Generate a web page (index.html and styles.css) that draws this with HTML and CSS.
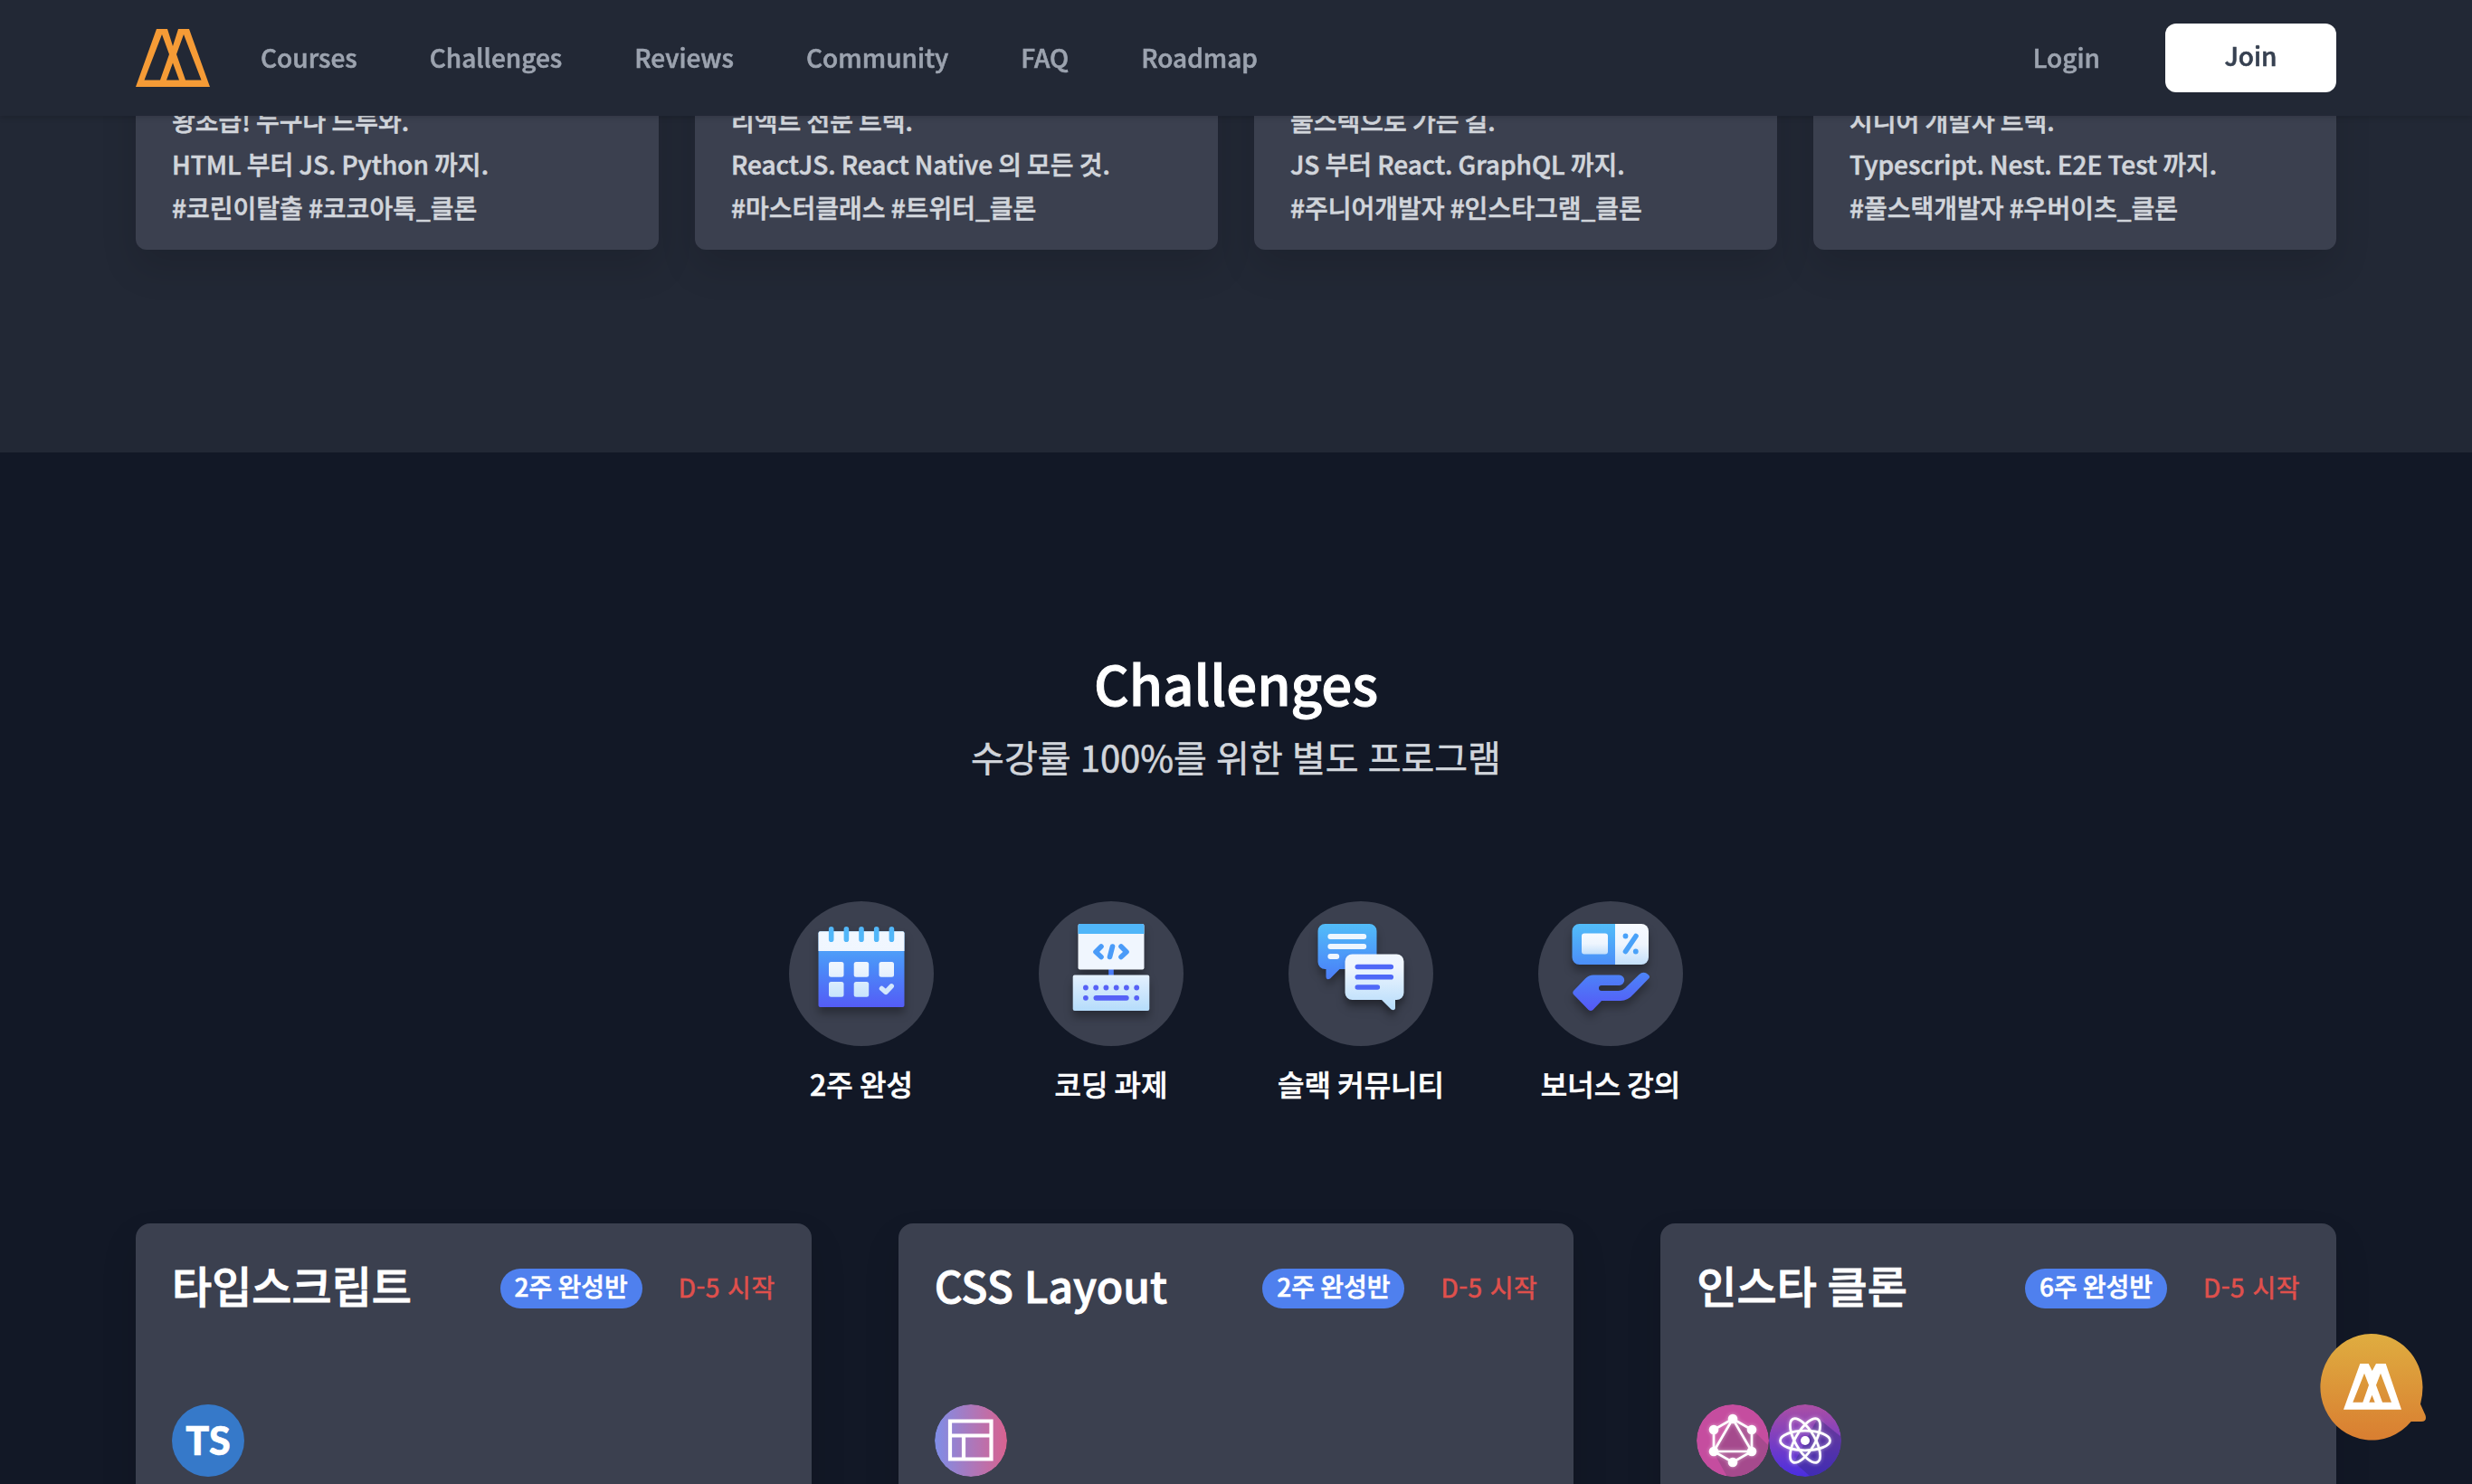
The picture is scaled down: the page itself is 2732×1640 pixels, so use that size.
FILE: index.html
```html
<!DOCTYPE html>
<html lang="ko">
<head>
<meta charset="utf-8">
<title>Challenges</title>
<link rel="stylesheet" href="styles.css">
</head>
<body>
<svg class="defs" width="0" height="0" aria-hidden="true">
  <defs>
    <linearGradient id="blue" gradientUnits="userSpaceOnUse" x1="0" y1="0" x2="0" y2="96"><stop offset="0" stop-color="#52bdf9"/><stop offset=".5" stop-color="#4b8bf8"/><stop offset="1" stop-color="#5558f6"/></linearGradient>
    <linearGradient id="pale" gradientUnits="userSpaceOnUse" x1="0" y1="0" x2="0" y2="96"><stop offset="0" stop-color="#f3f8ff"/><stop offset=".5" stop-color="#eef5fe"/><stop offset="1" stop-color="#b5dcfb"/></linearGradient>
    <linearGradient id="ticket" x1="0" y1="0" x2="0" y2="1"><stop offset="0" stop-color="#f7faff"/><stop offset=".5" stop-color="#eef5fe"/><stop offset="1" stop-color="#c3e0fb"/></linearGradient>
    <linearGradient id="gold" x1="0" y1="0" x2="0" y2="1"><stop offset="0" stop-color="#dfad40"/><stop offset="1" stop-color="#d97e31"/></linearGradient>
    <linearGradient id="rose" x1="0" y1="0" x2="1" y2="0"><stop offset="0" stop-color="#7e8ee8"/><stop offset="1" stop-color="#d9628f"/></linearGradient>
    <linearGradient id="violet" x1="0" y1="0" x2="0" y2="1"><stop offset="0" stop-color="#ac4fa4"/><stop offset="1" stop-color="#4a2ee0"/></linearGradient>
    <clipPath id="round"><circle cx="40" cy="40" r="40"/></clipPath>
  </defs>
</svg>

<header class="nav">
  <div class="wrap nav-row">
    <svg class="logo" viewBox="0 0 82 64"><path fill="#f59b36" fill-rule="evenodd" d="M23 0H35L41 19L47 0H59L82 64H0ZM29 6L9.500 56.500H27L37 28ZM53 6L45 28L55 56.500H72.500ZM41 37.500L34 56.500H48Z"/></svg>
    <nav class="links">
      <a>Courses</a><a>Challenges</a><a>Reviews</a><a>Community</a><a>FAQ</a><a>Roadmap</a>
    </nav>
    <a class="login">Login</a>
    <a class="join">Join</a>
  </div>
</header>

<section class="tracks">
  <div class="wrap track-grid">
    <article class="track"><p>왕초급! 누구나 드루와.</p><p>HTML 부터 JS. Python 까지.</p><p>#코린이탈출 #코코아톡_클론</p></article>
    <article class="track"><p>리액트 전문 트랙.</p><p>ReactJS. React Native 의 모든 것.</p><p>#마스터클래스 #트위터_클론</p></article>
    <article class="track"><p>풀스택으로 가는 길.</p><p>JS 부터 React. GraphQL 까지.</p><p>#주니어개발자 #인스타그램_클론</p></article>
    <article class="track"><p>시니어 개발자 트랙.</p><p>Typescript. Nest. E2E Test 까지.</p><p>#풀스택개발자 #우버이츠_클론</p></article>
  </div>
</section>

<main class="challenges">
  <h1>Challenges</h1>
  <p class="sub">수강률 100%를 위한 별도 프로그램</p>

  <ul class="perks">
    <li>
      <span class="disc"><svg viewBox="0 0 96 96">
        <rect x=".5" y="8.300" width="95" height="83.700" rx="2" fill="url(#blue)"/>
        <path d="M.5 30V10.300a2 2 0 0 1 2-2h91a2 2 0 0 1 2 2V30z" fill="url(#pale)"/>
        <path d="M14.700 5.800v11.400M31.400 5.800v11.400M48 5.800v11.400M64.700 5.800v11.400M81.400 5.800v11.400" stroke="#52b7f9" stroke-width="5.600" stroke-linecap="round"/>
        <g fill="url(#pale)"><rect x="12" y="42" width="16.500" height="16.700" rx="2.500"/><rect x="39.700" y="42" width="16.500" height="16.700" rx="2.500"/><rect x="67.500" y="42" width="16.500" height="16.700" rx="2.500"/><rect x="12" y="64" width="16.500" height="16.700" rx="2.500"/><rect x="39.700" y="64" width="16.500" height="16.700" rx="2.500"/></g>
        <path d="M70.500 71.500l4.500 3.800 6.200-6.500" fill="none" stroke="#d3e8fc" stroke-width="5.500" stroke-linecap="round" stroke-linejoin="round"/>
      </svg></span>
      <b>2주 완성</b>
    </li>
    <li>
      <span class="disc"><svg viewBox="0 0 96 96">
        <rect x="45.200" y="45" width="5.600" height="12" fill="#4a7cf8"/>
        <rect x="11.500" y="0" width="73" height="50.500" rx="2" fill="#f0f6fe"/>
        <path d="M11.500 11V2a2 2 0 0 1 2-2h69a2 2 0 0 1 2 2v9z" fill="#50b6f9"/>
        <path d="M37 25l-6 6 6 5.500M49.500 25l-3 11.500M59 25l6 6-6 5.500" fill="none" stroke="#4a9bf8" stroke-width="5.600" stroke-linecap="round" stroke-linejoin="round"/>
        <rect x="5.700" y="56.500" width="84.600" height="39.500" rx="2" fill="url(#pale)"/>
        <g fill="#5661f6"><circle cx="19.900" cy="70.500" r="2.900"/><circle cx="31.200" cy="70.500" r="2.900"/><circle cx="42.400" cy="70.500" r="2.900"/><circle cx="53.700" cy="70.500" r="2.900"/><circle cx="64.900" cy="70.500" r="2.900"/><circle cx="76.200" cy="70.500" r="2.900"/><circle cx="19.900" cy="81.800" r="2.900"/><circle cx="76.200" cy="81.800" r="2.900"/><rect x="28.500" y="78.900" width="39.200" height="5.800" rx="2.900"/></g>
      </svg></span>
      <b>코딩 과제</b>
    </li>
    <li>
      <span class="disc"><svg viewBox="0 0 96 96">
        <path d="M8.500 0h49a8 8 0 0 1 8 8v34H40v8H24.500L14 60.500q-4.500 2-4.500-2V50H8.500a8 8 0 0 1-8-8V8a8 8 0 0 1 8-8z" fill="url(#blue)"/>
        <path d="M14.300 14h37M14.300 25h37M14.300 36h7" stroke="#eef6fe" stroke-width="5.800" stroke-linecap="round"/>
        <g class="cast"><path d="M38.500 33.500h49a8 8 0 0 1 8 8V76a8 8 0 0 1-8 8h-1.500v9.500q-1 3-4.500 1L71 84H38.500a8 8 0 0 1-8-8V41.500a8 8 0 0 1 8-8z" fill="url(#pale)"/></g>
        <path d="M44.300 47.500h37M44.300 58.800h37M44.300 70h22" stroke="#4f68f7" stroke-width="5.600" stroke-linecap="round"/>
      </svg></span>
      <b>슬랙 커뮤니티</b>
    </li>
    <li>
      <span class="disc"><svg viewBox="0 0 96 96">
        <path d="M13.500 0H53v45H13.500a8 8 0 0 1-8-8V8a8 8 0 0 1 8-8z" fill="url(#blue)"/>
        <path d="M53 0h29a8 8 0 0 1 8 8v29a8 8 0 0 1-8 8H53z" fill="url(#ticket)"/>
        <rect x="16" y="10.500" width="29" height="23" rx="3" fill="url(#ticket)"/>
        <path d="M64.500 30.500l11.500-17" stroke="#4aa2f9" stroke-width="5.600" stroke-linecap="round"/>
        <circle cx="64.500" cy="13.500" r="2.900" fill="#4aa2f9"/><circle cx="75.800" cy="30.500" r="2.900" fill="#4aa2f9"/>
        <path d="M29 56.500H57.500a5.700 5.700 0 0 1 0 11.400H38a3 3 0 0 0 0 6H57q4 0 7-3L79.500 56q5-4.500 10 0 2.500 2 1 4L74 77q-7 8-15 8H38L28.500 95q-2.500 2-5 0L7 78q-1.500-2 0-4L20 60.500q4-4 9-4z" fill="url(#blue)"/>
      </svg></span>
      <b>보너스 강의</b>
    </li>
  </ul>

  <div class="wrap cards">
    <article class="card">
      <div class="card-head"><h2>타입스크립트</h2><span class="pill">2주 완성반</span><span class="due">D-5 시작</span></div>
      <div class="tech"><span class="ts">TS</span></div>
    </article>
    <article class="card">
      <div class="card-head"><h2>CSS Layout</h2><span class="pill">2주 완성반</span><span class="due">D-5 시작</span></div>
      <div class="tech"><svg viewBox="0 0 80 80"><circle cx="40" cy="40" r="40" fill="url(#rose)"/><path d="M17 18.500H62.500V60.500H17ZM17 34.500H62.500M32 34.500V60.500" fill="none" stroke="#fff" stroke-width="4.200"/></svg></div>
    </article>
    <article class="card">
      <div class="card-head"><h2>인스타 클론</h2><span class="pill">6주 완성반</span><span class="due">D-5 시작</span></div>
      <div class="tech">
        <svg viewBox="0 0 80 80"><g clip-path="url(#round)"><rect width="80" height="80" fill="#c54d9f"/><path d="M40 16L61 27L84 50V84H36L19 53Z" fill="#a54a8d"/></g>
          <g class="glow"><path d="M40 16L61 28V52L40 64L19 52V28ZM40 16L61 52H19Z" stroke="#fff" fill="none" stroke-width="2.700"/>
          <g fill="#fff"><circle cx="40" cy="16" r="5.300"/><circle cx="61" cy="28" r="5.300"/><circle cx="61" cy="52" r="5.300"/><circle cx="40" cy="64" r="5.300"/><circle cx="19" cy="52" r="5.300"/><circle cx="19" cy="28" r="5.300"/></g></g></svg>
        <svg viewBox="0 0 80 80"><circle cx="40" cy="40" r="40" fill="url(#violet)"/><path clip-path="url(#round)" d="M54 15L80 36V80H46L28 64Z" fill="#332b7e" opacity=".45"/>
          <g class="glow" stroke="#fff" fill="none" stroke-width="2.800"><ellipse cx="40" cy="40" rx="27.500" ry="10.800"/><ellipse cx="40" cy="40" rx="27.500" ry="10.800" transform="rotate(60 40 40)"/><ellipse cx="40" cy="40" rx="27.500" ry="10.800" transform="rotate(120 40 40)"/></g><circle cx="40" cy="40" r="5" fill="#fff"/></svg>
      </div>
    </article>
  </div>
</main>

<div class="chat">
  <svg viewBox="0 0 118 118"><path fill="url(#gold)" d="M57.500 0C89 0 114.500 26 114.500 59Q114.500 68 112 77.700L117.500 90Q119.500 97 113 97H101.700A57 58.800 0 1 1 57.500 0Z"/>
  <path fill="#fff" fill-rule="evenodd" d="M45.300 33H54.700L58.700 41L63 33H73.700L91 83.700H27ZM50 43.700L37.300 75.700H48.300L55 56.700ZM68 43.700L63 56.700L70 75.700H80ZM58.500 67.700L55.300 75.700H61.700Z"/></svg>
</div>
</body>
</html>
```
FILE: styles.css
```css
* { box-sizing: border-box; margin: 0; padding: 0; }
body {
  height: 1640px;
  overflow: hidden;
  background: #121826;
  color: #fff;
  font-family: "Noto Sans CJK KR", sans-serif;
  font-weight: 500;
  word-spacing: -1.7px;
  -webkit-text-stroke: .6px currentColor;
}
.defs { position: absolute; }
.wrap { width: 2432px; margin: 0 auto; }

/* Fixed top bar */
.nav {
  position: fixed;
  top: 0;
  left: 0;
  right: 0;
  z-index: 2;
  height: 128px;
  background: #222835;
  box-shadow: 0 2px 6px rgba(0, 0, 0, .15);
}
.nav-row { display: flex; align-items: center; height: 128px; }
.logo { width: 82px; height: 64px; }
.links { display: flex; gap: 80px; margin-left: 56px; }
.links a, .login { padding-bottom: 2px; font-size: 28px; line-height: 42px; color: #9ca3af; }
.login { margin-left: auto; }
.join {
  width: 189px;
  height: 76px;
  margin-left: 72px;
  border-radius: 12px;
  background: #fff;
  color: #374151;
  font-size: 28px;
  line-height: 71px;
  text-align: center;
}

/* Course tracks */
.tracks { height: 500px; background: #222835; }
.track-grid { display: grid; grid-template-columns: repeat(4, 1fr); gap: 40px; }
.track {
  height: 276px;
  padding: 109px 40px 0;
  border-radius: 12px;
  background: #3b404f;
  box-shadow: 0 20px 40px rgba(0, 0, 0, .12);
  color: #d1d5db;
  font-size: 28px;
  line-height: 48px;
  white-space: nowrap;
}

/* Challenges */
.challenges { height: 1140px; overflow: hidden; padding-top: 206px; text-align: center; }
h1 { font-size: 60px; line-height: 96px; font-weight: 500; -webkit-text-stroke-width: 1px; }
.sub { margin-top: 6px; font-size: 40px; line-height: 56px; font-weight: 400; word-spacing: -1px; color: #d1d5db; }
.perks { display: flex; justify-content: center; gap: 116px; margin-top: 132px; list-style: none; }
.perks li { display: flex; flex-direction: column; align-items: center; width: 160px; white-space: nowrap; }
.perks b { margin-top: 17px; font-size: 32px; line-height: 48px; font-weight: 500; }
.disc { width: 160px; height: 160px; padding: 25px 32px; border-radius: 50%; background: #3b404f; }
.disc svg { display: block; width: 96px; height: 96px; overflow: visible; filter: drop-shadow(0 7px 5px rgba(0, 0, 0, .3)); }
.cast { filter: drop-shadow(0 4px 3px rgba(0, 0, 0, .15)); }

.cards { display: grid; grid-template-columns: repeat(3, 746.67px); justify-content: space-between; margin-top: 131px; }
.card {
  height: 500px;
  padding: 34px 40px;
  border-radius: 16px;
  background: #3b404f;
  box-shadow: 0 20px 40px rgba(0, 0, 0, .12);
  text-align: left;
}
.card-head { display: flex; align-items: center; height: 72px; }
h2 { margin: -6px auto 0 0; font-size: 48px; line-height: 72px; font-weight: 500; -webkit-text-stroke-width: .9px; }
.pill { height: 44px; margin-top: 4px; padding: 0 16px; border-radius: 22px; background: #4f80ee; font-size: 28px; line-height: 39px; }
.due { margin-left: 40px; color: #e0504c; font-size: 28px; line-height: 39px; font-weight: 400; letter-spacing: .5px; word-spacing: 0; }
.tech { display: flex; margin-top: 94px; }
.tech svg, .ts { display: block; width: 80px; height: 80px; border-radius: 50%; }
.ts { background: #3679c9; font-family: Lato, sans-serif; font-size: 43px; font-weight: 900; line-height: 80px; text-align: center; }
.glow { filter: drop-shadow(0 0 2px rgba(255, 255, 255, .5)); }

/* Chat launcher floats over the page */
.chat { position: fixed; left: 2563px; top: 1474px; z-index: 3; width: 118px; height: 118px; }
.chat svg { display: block; width: 118px; height: 118px; }
```
